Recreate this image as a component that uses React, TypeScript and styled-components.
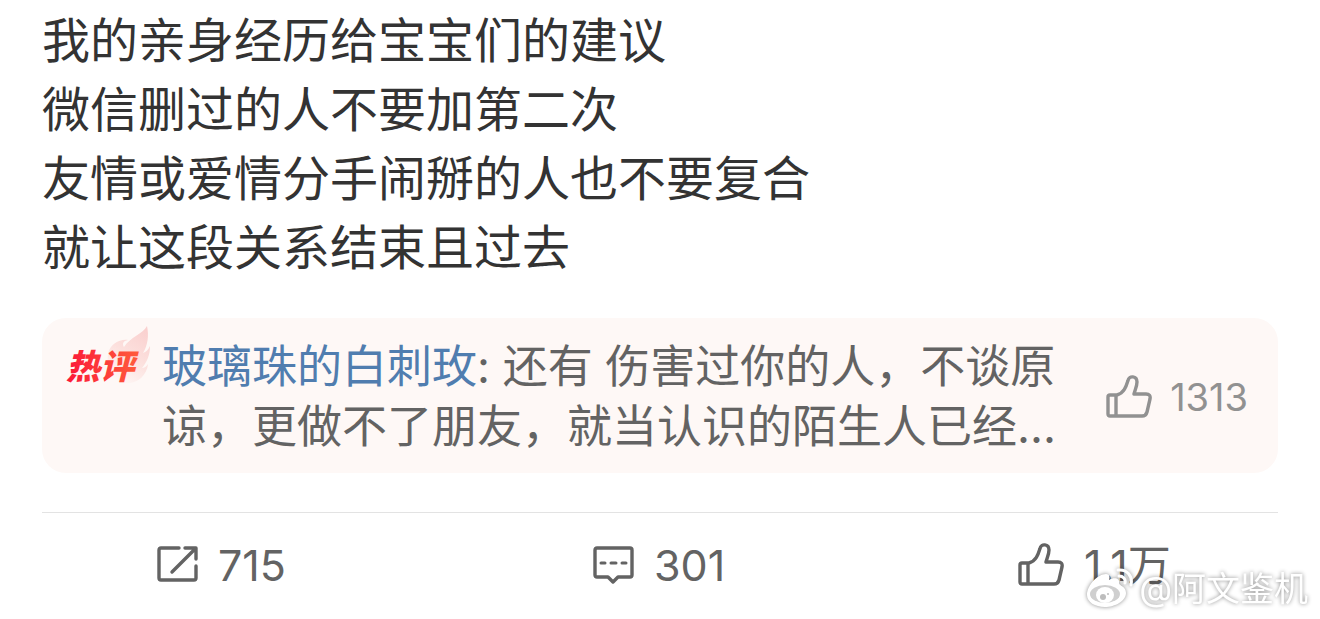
import React from "react";
import styled, { createGlobalStyle } from "styled-components";

const Global = createGlobalStyle`
  * { box-sizing: border-box; }
  body { margin: 0; background: #fff; font-family: Inter, "Noto Sans CJK SC", sans-serif; }
`;

const Page = styled.main`
  position: relative;
  padding: 6px 42px 24px;
`;

const Post = styled.p`
  margin: 0;
  color: #333;
  font-size: 48px;
  line-height: 69px;
`;

const HotComment = styled.section`
  display: flex;
  align-items: flex-start;
  margin-top: 36px;
  padding: 19px 30px 16px 18px;
  border-radius: 24px;
  background: #fef8f6;
`;

const Badge = styled.svg`
  flex: none;
  width: 96px;
  height: 70px;
  margin-top: -16px;
`;

const BadgeText = styled.text`
  font-family: "Noto Sans CJK SC", sans-serif;
  font-size: 34px;
  font-style: italic;
  font-weight: 900;
`;

const CommentText = styled.p`
  flex: 1;
  margin: 0 36px 0 6px;
  color: #636363;
  font-size: 45px;
  line-height: 60px;
`;

const UserLink = styled.a`
  color: #507daf;
  text-decoration: none;
`;

const ActionButton = styled.button`
  display: flex;
  align-items: center;
  justify-self: start;
  gap: 20px;
  padding: 0;
  border: 0;
  background: none;
  color: #636363;
  font: inherit;
  font-size: 43px;
  line-height: 60px;
  white-space: nowrap;
`;

const CommentLike = styled(ActionButton)`
  align-self: center;
  gap: 18px;
  color: #919191;
  font-size: 38px;
`;

const Actions = styled.footer`
  display: grid;
  grid-template-columns: 436fr 425fr 260fr;
  margin-top: 39px;
  padding: 22px 0 0 115px;
  border-top: 1px solid #e3e3e3;
`;

const Icon = styled.svg`
  flex: none;
  fill: none;
  stroke: currentColor;
  stroke-width: 3.4;
  stroke-linecap: round;
  stroke-linejoin: round;
`;

const Watermark = styled.div`
  position: absolute;
  right: 12px;
  bottom: 6px;
  display: flex;
  align-items: center;
  gap: 5px;
  color: #fff;
  font-size: 34px;
  line-height: 48px;
  filter: drop-shadow(0 0 2px rgba(0, 0, 0, 0.45));
`;

const FlameBadge = () => (
  <Badge viewBox="0 0 96 70" role="img" aria-label="热评">
    <defs>
      <linearGradient id="flame" x1="0.8" y1="0" x2="0.3" y2="1">
        <stop offset="0" stopColor="#fad0cf" />
        <stop offset="0.5" stopColor="#fce0dd" />
        <stop offset="1" stopColor="#fef8f6" />
      </linearGradient>
      <linearGradient id="hot" x1="0" y1="0" x2="1" y2="0">
        <stop offset="0" stopColor="#fb1838" />
        <stop offset="1" stopColor="#ff5c3c" />
      </linearGradient>
    </defs>
    <path
      fill="url(#flame)"
      d="M87 5C83 13 70 16 64 26C62 23 63 20 68 19C59 18 51 23 48 32L46 62H68C78 62 87 54 88 43C86 46 84 47 82 47C87 41 90 34 90 25C88 29 86 31 83 32C88 24 89 14 87 5Z"
    />
    <BadgeText x="6" y="58" fill="url(#hot)">热评</BadgeText>
  </Badge>
);

const ThumbIcon = () => (
  <Icon width="46" height="46" viewBox="0 0 46 46" aria-hidden="true">
    <path d="M4 21H11C18 19 20 13 22 6.500C23 1 31 2 31 8C31 12 29 16 28 20H40Q45 20 44 25L41 38Q40 42 36 42H4Q2 42 2 40V23Q2 21 4 21ZM10 21V42" />
  </Icon>
);

const ShareIcon = () => (
  <Icon width="41" height="38" viewBox="0 0 41 38" aria-hidden="true">
    <path d="M22 2H4Q2 2 2 4V32Q2 34 4 34H37Q39 34 39 32V20M28 2H39V13M38 3L15 26" />
  </Icon>
);

const CommentIcon = () => (
  <Icon width="41" height="38" viewBox="0 0 41 38" aria-hidden="true">
    <path d="M4 2H37Q39 2 39 4V29Q39 31 37 31H25L20 36L15 31H4Q2 31 2 29V4Q2 2 4 2Z" />
    <path strokeWidth="3" d="M8 17H12M18 17H23M29 17H33" />
  </Icon>
);

const WeiboIcon = () => (
  <svg width="48" height="42" viewBox="0 0 48 42" aria-hidden="true">
    <path
      fill="#fff"
      d="M1 27C1 17 12 6 20 6C24 6 24 10 23 12C28 9 34 10 33 15C33 18 40 18 40 25C40 33 29 39 19 39C9 39 1 34 1 27Z"
    />
    <ellipse cx="19" cy="26" rx="15" ry="9" fill="#cfcfcf" />
    <ellipse cx="19" cy="27" rx="9" ry="8" fill="#fff" />
    <circle cx="17" cy="29" r="3" fill="#bdbdbd" />
    <circle cx="22" cy="26" r="1" fill="#bdbdbd" />
    <path fill="none" stroke="#fff" strokeWidth="3" strokeLinecap="round" d="M32 2C41 1 47 8 45 17M33 8C37 8 40 11 39 15" />
  </svg>
);

const App = () => (
  <>
    <Global />
    <Page>
      <Post>
        我的亲身经历给宝宝们的建议<br />
        微信删过的人不要加第二次<br />
        友情或爱情分手闹掰的人也不要复合<br />
        就让这段关系结束且过去
      </Post>
      <HotComment>
        <FlameBadge />
        <CommentText>
          <UserLink href="#user">玻璃珠的白刺玫</UserLink>: 还有 伤害过你的人，不谈原谅，更做不了朋友，就当认识的陌生人已经...
        </CommentText>
        <CommentLike type="button"><ThumbIcon />1313</CommentLike>
      </HotComment>
      <Actions>
        <ActionButton type="button"><ShareIcon />715</ActionButton>
        <ActionButton type="button"><CommentIcon />301</ActionButton>
        <ActionButton type="button"><ThumbIcon />1.1万</ActionButton>
      </Actions>
      <Watermark><WeiboIcon />@阿文鉴机</Watermark>
    </Page>
  </>
);

export default App;
